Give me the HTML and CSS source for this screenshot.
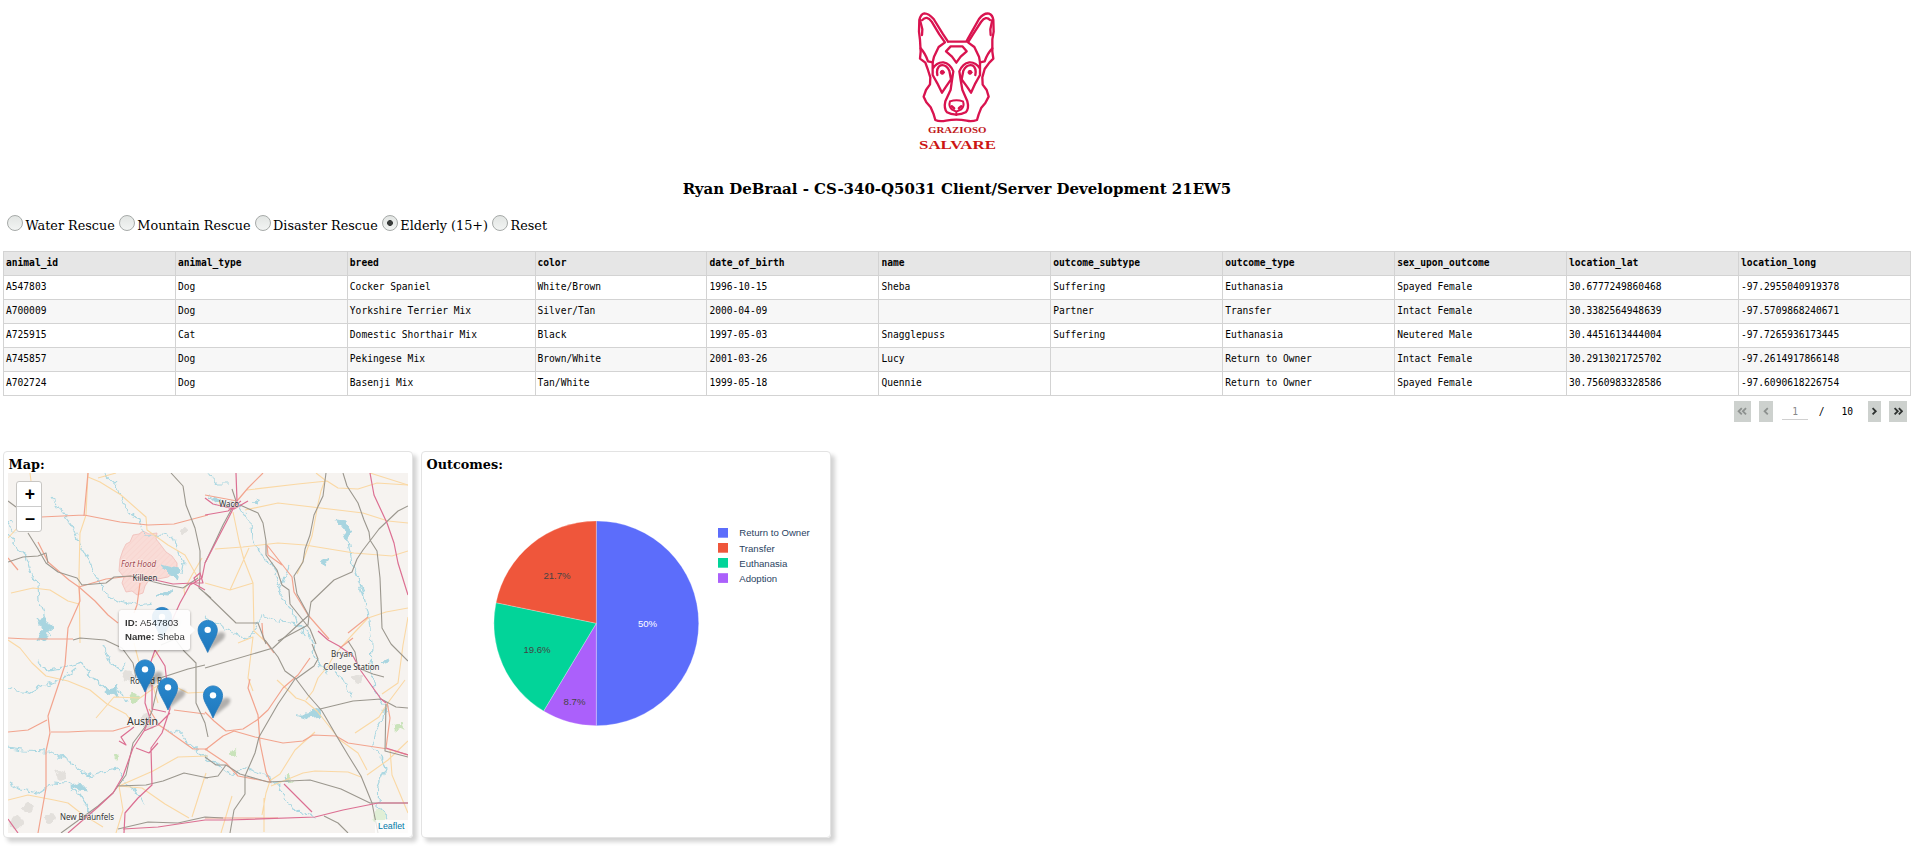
FILE: index.html
```html
<!DOCTYPE html>
<html lang="en">
<head>
<meta charset="utf-8">
<title>Grazioso Salvare Dashboard</title>
<link rel="stylesheet" href="styles.css">
</head>
<body>
<header class="brand">
  <svg class="logo" viewBox="0 0 360 480" role="img" aria-label="Grazioso Salvare">
    <g fill="none" stroke="#d9134f" stroke-width="7" stroke-linejoin="round" stroke-linecap="round">
      <path d="M144 125L199 125L206 112L237 57Q252 38 267 41Q278 45 280 60L281 95L277 118L277 155L280 176L268 188L254 207L247 232L248 254L260 270L266 290L256 309L244 323L236 343L231 360Q215 366 200 362Q169 356 138 362Q118 366 106 360L101 343L92 322L79 307L71 290L78 270L90 253L91 232L83 207L76 188L60 176L62 155L60 120L57 95L58 60Q62 42 73 40Q86 40 101 57L128 101L144 125"/>
      <path d="M60 60L67 88L66 105M67 60Q80 45 95 65L118 103L135 127L116 141L102 170L98 187L84 184Q76 160 62 145M277 60L271 88L272 105M270 60Q258 46 243 66L219 103L204 127L223 141L237 170L240 187L254 184Q262 160 277 145"/>
      <path d="M152 139L187 139L200 154L182 170L169 188L156 170L138 154Z"/>
      <path d="M98 187L98 225L112 250L126 278L136 263L153 238L148 212Q138 192 122 196Q108 204 112 225M98 206Q110 186 130 187Q150 190 160 214L156 240L152 269L136 304Q131 326 141 337Q152 343 168 344Q186 343 197 337Q208 326 202 304L187 269L182 240L178 214Q188 190 208 187Q228 186 240 206M240 187L240 225L226 250L213 278L203 263L185 238L190 212Q200 192 217 196Q230 204 226 225"/>
      <path d="M150 304Q169 298 189 304Q194 318 184 328L169 335L155 328Q145 318 150 304M169 335L169 345" stroke-width="6"/>
      <path d="M155 319L162 325M184 319L177 325" stroke-width="8"/>
      <circle cx="127" cy="217" r="6" fill="#d9134f" stroke-width="3"/>
      <circle cx="210" cy="217" r="6" fill="#d9134f" stroke-width="3"/>
    </g>
    <text class="logo-small" x="84" y="399" textLength="175" lengthAdjust="spacingAndGlyphs">GRAZIOSO</text>
    <text class="logo-large" x="57" y="446" textLength="231" lengthAdjust="spacingAndGlyphs">SALVARE</text>
  </svg>
  <h3 class="title">Ryan DeBraal - CS-340-Q5031 Client/Server Development 21EW5</h3>
</header>

<form class="filters">
  <label class="option"><input type="radio" name="f">Water Rescue</label>
  <label class="option"><input type="radio" name="f">Mountain Rescue</label>
  <label class="option"><input type="radio" name="f">Disaster Rescue</label>
  <label class="option"><input type="radio" name="f" checked>Elderly (15+)</label>
  <label class="option"><input type="radio" name="f">Reset</label>
</form>

<table class="data">
  <colgroup><col><col><col class="col-breed"><col><col><col><col><col><col><col><col></colgroup>
  <thead><tr><th>animal_id</th><th>animal_type</th><th>breed</th><th>color</th><th>date_of_birth</th><th>name</th><th>outcome_subtype</th><th>outcome_type</th><th>sex_upon_outcome</th><th>location_lat</th><th>location_long</th></tr></thead>
  <tbody>
    <tr><td>A547803</td><td>Dog</td><td>Cocker Spaniel</td><td>White/Brown</td><td>1996-10-15</td><td>Sheba</td><td>Suffering</td><td>Euthanasia</td><td>Spayed Female</td><td>30.6777249860468</td><td>-97.2955040919378</td></tr>
    <tr><td>A700009</td><td>Dog</td><td>Yorkshire Terrier Mix</td><td>Silver/Tan</td><td>2000-04-09</td><td></td><td>Partner</td><td>Transfer</td><td>Intact Female</td><td>30.3382564948639</td><td>-97.5709868240671</td></tr>
    <tr><td>A725915</td><td>Cat</td><td>Domestic Shorthair Mix</td><td>Black</td><td>1997-05-03</td><td>Snagglepuss</td><td>Suffering</td><td>Euthanasia</td><td>Neutered Male</td><td>30.4451613444004</td><td>-97.7265936173445</td></tr>
    <tr><td>A745857</td><td>Dog</td><td>Pekingese Mix</td><td>Brown/White</td><td>2001-03-26</td><td>Lucy</td><td></td><td>Return to Owner</td><td>Intact Female</td><td>30.2913021725702</td><td>-97.2614917866148</td></tr>
    <tr><td>A702724</td><td>Dog</td><td>Basenji Mix</td><td>Tan/White</td><td>1999-05-18</td><td>Quennie</td><td></td><td>Return to Owner</td><td>Spayed Female</td><td>30.7560983328586</td><td>-97.6090618226754</td></tr>
  </tbody>
</table>

<nav class="pager">
  <button class="page-btn first off" aria-label="First"><svg viewBox="0 0 10 8"><path d="M4.5 1L1.5 4L4.5 7M8.5 1L5.5 4L8.5 7"/></svg></button>
  <button class="page-btn prev off" aria-label="Previous"><svg viewBox="0 0 6 8"><path d="M4.5 1L1.5 4L4.5 7"/></svg></button>
  <span class="page-current">1</span>
  <span class="page-sep">/</span>
  <span class="page-last">10</span>
  <button class="page-btn next" aria-label="Next"><svg viewBox="0 0 6 8"><path d="M1.5 1L4.5 4L1.5 7"/></svg></button>
  <button class="page-btn last" aria-label="Last"><svg viewBox="0 0 10 8"><path d="M1.5 1L4.5 4L1.5 7M5.5 1L8.5 4L5.5 7"/></svg></button>
</nav>

<main class="panels">
  <section class="panel">
    <h4 class="panel-title">Map:</h4>
    <div class="map">
      <svg class="tiles" viewBox="0 0 400 360">
        <defs>
          <filter id="meander" x="-5%" y="-5%" width="110%" height="110%"><feTurbulence type="fractalNoise" baseFrequency="0.13" numOctaves="2" seed="4" result="n"/><feDisplacementMap in="SourceGraphic" in2="n" scale="9" xChannelSelector="R" yChannelSelector="G"/></filter>
          <filter id="soft" x="-50%" y="-50%" width="200%" height="200%"><feGaussianBlur stdDeviation="2"/></filter>
          <linearGradient id="pinfill" x1="0" y1="0" x2="0" y2="1"><stop offset="0" stop-color="#2b8ace"/><stop offset="1" stop-color="#1f78bd"/></linearGradient>
          <pattern id="hatch" width="4" height="4" patternUnits="userSpaceOnUse" patternTransform="rotate(45)"><rect width="4" height="4" fill="#f9dcd7"/><path d="M0 0V4" stroke="#f8d4cf" stroke-width="1.5"/></pattern>
          <g id="pin">
            <path d="M12 40L32 24Q38 15 28 15L20 20Z" fill="#000" opacity=".28" filter="url(#soft)"/>
            <path d="M12.5 .5C5.9 .5 .5 5.9 .5 12.5C.5 20 6 26 12.5 40.5C19 26 24.5 20 24.5 12.5C24.5 5.9 19.1 .5 12.5 .5Z" fill="url(#pinfill)" stroke="#2379bb"/>
            <circle cx="12.5" cy="12.3" r="4" fill="#fff"/>
          </g>
        </defs>
        <rect width="400" height="360" fill="#f6f3f0"/>

        <!-- urban and green areas -->
        <g fill="#e3e0dc" filter="url(#meander)">
          <circle cx="52" cy="303" r="5"/><circle cx="20" cy="335" r="5"/><circle cx="8" cy="349" r="7"/><circle cx="42" cy="345" r="6"/><circle cx="120" cy="203" r="6"/><circle cx="139" cy="250" r="8"/><circle cx="176" cy="57" r="3"/><circle cx="350" cy="206" r="4"/><circle cx="222" cy="32" r="5"/>
        </g>
        <g fill="#c9e3ba" filter="url(#meander)">
          <circle cx="126" cy="225" r="5"/><circle cx="390" cy="254" r="4"/><circle cx="225" cy="280" r="3"/><circle cx="371" cy="343" r="7" fill="#e0efd6"/><circle cx="281" cy="305" r="3"/><circle cx="108" cy="283" r="2"/>
        </g>
        <path d="M112 86L115 77L118 71L122 69L125 62L131 61L135 58L141 61L149 60L148 66L152 71L158 79L164 83L169 90L169 97L160 104L150 106L141 107L137 113L135 120L129 122L124 118L118 119L114 110L116 104L111 98Z" fill="url(#hatch)" stroke="#f0bcb8" stroke-width=".8"/>

        <!-- rivers and lakes -->
        <g fill="none" stroke="#a9d7e2" stroke-width="1.2" filter="url(#meander)">
          <path d="M42 23L55 40L66 55L72 72L82 89L87 102L100 122L112 128L132 132L144 130"/>
          <path d="M95 0L108 12L115 30L122 42L132 46L137 63L155 62L166 66L171 80L176 90L174 100"/>
          <path d="M0 62L8 72L17 82L22 98L30 112L31 128L36 144L43 160M0 48L8 60"/>
          <path d="M0 215L20 220L35 212L55 206L70 195M28 188L40 197L55 195L72 190L86 205L100 217L110 215L118 228M95 172L103 190L112 197L120 191"/>
          <path d="M0 275L15 277L40 278L55 285L63 290L80 303L95 298L110 295L117 310L128 318L136 332M0 309L12 317L30 320L45 310L60 311L72 322L85 342"/>
          <path d="M200 0L208 10L222 10M229 28L238 42L243 50L244 66L248 76L260 88L268 100L273 117L275 127L285 137L290 151L296 165M271 119L281 94"/>
          <path d="M197 145L215 154L238 166L248 158L253 142L270 148L290 150L300 160L306 171M340 68L344 90L350 106L354 118L360 138L362 155L364 172L363 196L367 216L377 233L375 245L365 262L364 274L374 285L377 298L371 312L370 332L380 344"/>
          <path d="M304 172L307 186L319 200M327 200L335 206L344 226M157 256L170 258L178 268L192 280L208 291L222 301L238 295L255 301L270 313L283 334L298 342L308 345"/>
        </g>
        <g fill="#a8d5e0" stroke="#a8d5e0" filter="url(#meander)">
          <path d="M30 147L34 142L40 151L46 154L39 160L36 167L30 167L34 158Z"/>
          <path d="M328 47L339 48L343 60L340 68L336 58Z"/><path d="M153 92L165 95L172 97L169 107L160 100Z"/>
          <path d="M149 121L157 118L165 119L160 122Z"/><path d="M288 241L300 241L311 235L313 243L300 245Z"/>
          <path d="M62 312L72 309L80 318L71 317Z"/><path d="M96 215L104 217L111 210L108 222L99 221Z"/><path d="M245 29L251 25L248 30Z"/><path d="M313 90L320 87L318 93Z"/><path d="M375 188L382 185L379 191Z"/><path d="M276 303L282 305L279 309Z"/>
          <path d="M200 23L214 27L208 30Z"/>
        </g>

        <!-- secondary roads -->
        <g fill="none" stroke="#fad8a4" stroke-width="1.1" stroke-linejoin="round">
          <path d="M22 0L23 8M3 120L25 115L42 117L60 128L71 131M0 65L12 52M72 170L71 100L72 60L78 42L80 0"/>
          <path d="M80 4L92 9L113 22L138 44L139 57L160 72L177 82L190 105M194 85L184 102L176 117L177 122M90 5L108 0"/>
          <path d="M239 17L290 11L319 8L330 15L350 16L369 10L400 12M308 0L317 7L313 18L310 31L304 63L295 88L289 101"/>
          <path d="M237 37L270 30L330 37L355 40L380 48L400 50M207 76L235 74L270 70L297 72L346 80L384 83L400 78M225 39L231 68L236 87L245 110L246 158L260 171M222 117L241 75M197 110L222 117L245 110"/>
          <path d="M400 135L378 139L360 145L346 160L335 172L325 184L320 193L310 205L305 218L298 227M362 0L400 12M400 144L395 172L390 210L374 221"/>
          <path d="M0 167L12 175L24 190L38 203L60 208L82 217L99 231L118 241L127 253M88 245L106 224L132 225L156 208L180 220L200 219M126 170L133 197L145 213L150 230M152 176L145 185"/>
          <path d="M0 327L20 322L46 327L60 330L74 341L95 354M200 283L170 284L145 298L111 313M111 313L115 337L108 360M111 313L134 315L157 331L181 345M198 300L184 344M230 170L245 164L240 205L245 218"/>
          <path d="M269 207L282 219L288 225L297 228L309 238L332 267L350 280L359 297M260 309L272 301L287 277L307 259M347 260L371 244L379 231L397 207M359 302L380 287L400 268M263 313L295 300L307 298L340 299L353 304M382 276L384 302L400 340M254 342L258 320L262 308M224 323L213 360M256 359L256 325"/>
        </g>

        <!-- primary roads -->
        <g fill="none" stroke="#f2a48e" stroke-width="1.2" stroke-linejoin="round">
          <path d="M80 0L76 43M33 44L76 42L112 49L140 52L166 51L200 42M30 69L40 89L61 107L71 114L72 128L60 155L57 192L40 243L42 260L38 278L38 315L30 360"/>
          <path d="M71 114L87 128L100 142L110 150M71 114L98 106L123 103M132 110L129 132L126 140M0 165L20 166L65 166M0 259L20 257L39 247M43 259L60 259L80 258L105 258L122 253"/>
          <path d="M141 236L151 252L171 266L185 276L200 276M197 22L229 28L240 15L255 0M259 72L273 90L284 104L286 119L300 142L321 166M259 72L260 82L274 92"/>
          <path d="M254 150L255 165L266 180M0 85L10 97M332 175L345 165M302 185L290 202L275 215L260 237L249 247L235 256L218 258L206 248L197 239M242 206L240 215L250 242L252 270L258 299L263 310M197 277L215 263L226 258L247 264L275 270L295 268L305 262L328 263L340 270L380 276L400 282M166 237L197 241M379 229L382 245L378 275"/>
          <path d="M197 345L230 345L270 345M197 276L218 290L230 303L262 309M340 160L360 144"/>
        </g>

        <!-- railways -->
        <g fill="none" stroke="#9b978e" stroke-width="1.1" stroke-linejoin="round">
          <path d="M0 28L8 34M20 60L30 76L38 90L50 99L69 105L74 112L98 110L106 104L123 103L154 111L175 115L190 105M0 89L15 84L30 83L38 80L40 90"/>
          <path d="M163 0L175 13L178 32L187 55L192 78L192 102L191 115L203 125M65 167L72 165L97 167L114 175L125 190L128 205M153 172L167 166L176 178L188 190L188 230L197 250L200 264"/>
          <path d="M224 16L228 28L215 52L208 67L197 90M232 32L250 40L255 50L258 68L258 82L269 97L274 112L281 117L282 131L302 156L308 171M318 0L315 23L306 42L302 62L297 76L295 89L286 103L289 121L301 143L300 152L270 168"/>
          <path d="M335 0L339 13L350 30L356 47L361 59L362 67L369 78L372 105L373 129L374 155L383 171M383 171L400 188M400 33L390 38L371 56L355 77L349 86L344 99L326 107L303 129L301 142L292 150L265 175L197 195M197 120L228 150L250 150L258 171"/>
          <path d="M149 206L180 196L197 192M150 212L144 238L137 254L125 270L118 302L105 320L90 333L53 360M109 313L138 312L155 308L176 300L200 305M257 167L270 184L277 198L288 206L300 222L314 238L328 262L340 282L353 303L364 330L370 360"/>
          <path d="M288 206L306 193L310 186L304 171M287 206L270 231L251 264L247 280L237 303L237 321L226 337L222 360M312 236L345 228L373 226L388 234L400 235M378 231L377 278L400 284M197 284L208 292L218 292L232 301L260 309L302 307L333 316L362 330L400 330M197 305L210 303L218 292M316 343L330 350L340 360"/>
          <path d="M110 356L140 349L170 350L197 344L215 345M340 168L347 179L350 195L365 201L376 204"/>
        </g>

        <!-- motorways -->
        <g fill="none" stroke="#dc6f92" stroke-width="1.2" stroke-linejoin="round">
          <path d="M228 0L229 28L222 42L209 67L197 90L194 105L182 112L172 130L162 152M197 25L205 31L226 36L240 28M197 42L220 38L233 28M134 104L165 111L185 110L197 117M186 105L192 100L195 110L188 110Z"/>
          <path d="M362 0L366 22L379 50L386 70L390 90L400 122M320 167L331 173L345 183L353 198L373 226L378 230M310 158L320 167"/>
          <path d="M147 177L139 200L137 230L142 245L136 258L125 275L115 303L105 320L90 334L60 360M147 177L157 193L162 236L154 260L143 275L144 312L130 325L117 340L116 360M144 212L144 236L158 239M136 258L150 252L162 240M128 275L141 280L150 270M126 254L113 264L118 272L111 268"/>
          <path d="M0 346L10 360M115 356L150 354L197 347L220 347L307 344L335 337L370 330L400 330M276 311L290 325L304 339M378 275L400 282"/>
        </g>

        <g class="place">
          <text x="211" y="34" textLength="20" lengthAdjust="spacingAndGlyphs">Waco</text>
          <text class="base" x="113" y="93.500" textLength="35" lengthAdjust="spacingAndGlyphs">Fort Hood</text>
          <text x="124.500" y="107.500" textLength="25" lengthAdjust="spacingAndGlyphs">Killeen</text>
          <text x="122" y="211" textLength="32" lengthAdjust="spacingAndGlyphs">Round R</text>
          <text class="city" x="119" y="251.500" textLength="31" lengthAdjust="spacingAndGlyphs">Austin</text>
          <text x="323" y="183.500" textLength="22" lengthAdjust="spacingAndGlyphs">Bryan</text>
          <text x="315.500" y="197" textLength="56" lengthAdjust="spacingAndGlyphs">College Station</text>
          <text x="52" y="347" textLength="54" lengthAdjust="spacingAndGlyphs">New Braunfels</text>
        </g>

        <use href="#pin" transform="translate(144 134) scale(.8)"/>
        <use href="#pin" transform="translate(189.700 147) scale(.8)"/>
        <use href="#pin" transform="translate(127 186.500) scale(.8)"/>
        <use href="#pin" transform="translate(150 204.500) scale(.8)"/>
        <use href="#pin" transform="translate(195 212.500) scale(.8)"/>
      </svg>
      <div class="zoomer"><span>+</span><span>−</span></div>
      <div class="tip"><div><b>ID:</b> A547803</div><div><b>Name:</b> Sheba</div></div>
      <a class="credit">Leaflet</a>
    </div>
  </section>

  <section class="panel">
    <h4 class="panel-title">Outcomes:</h4>
    <svg class="chart" viewBox="0 0 400 360">
      <g stroke="#fff" stroke-opacity=".5" stroke-width=".5">
        <path d="M170.300 150.300V47.900A102.400 102.400 0 0 1 170.300 252.700Z" fill="#5c6dfb"/>
        <path d="M170.300 150.300V252.700A102.400 102.400 0 0 1 117.600 238.100Z" fill="#ab60fb"/>
        <path d="M170.300 150.300L117.600 238.100A102.400 102.400 0 0 1 70 129.700Z" fill="#02d499"/>
        <path d="M170.300 150.300L70 129.700A102.400 102.400 0 0 1 170.300 47.900Z" fill="#ef563b"/>
      </g>
      <g class="slice">
        <text x="221.500" y="153.500" fill="#fff">50%</text>
        <text x="131" y="105.500">21.7%</text>
        <text x="111" y="179.500">19.6%</text>
        <text x="148.500" y="231.500">8.7%</text>
      </g>
      <rect x="292" y="55" width="10" height="9.700" fill="#5c6dfb"/>
      <rect x="292" y="70" width="10" height="9.700" fill="#ef563b"/>
      <rect x="292" y="85" width="10" height="9.700" fill="#02d499"/>
      <rect x="292" y="100.200" width="10" height="9.700" fill="#ab60fb"/>
      <g class="legend">
        <text x="313.300" y="63">Return to Owner</text>
        <text x="313.300" y="79">Transfer</text>
        <text x="313.300" y="94">Euthanasia</text>
        <text x="313.300" y="109">Adoption</text>
      </g>
    </svg>
  </section>
</main>
</body>
</html>
```
FILE: styles.css
```css
* { box-sizing: border-box; }
body {
  margin: 0;
  min-height: 865px;
  background: #fff;
  color: #000;
  font: 12.8px/15px "DejaVu Serif", serif;
}
.brand { display: flex; flex-direction: column; align-items: center; }
.logo { display: block; width: 120px; height: 160px; margin-left: 5px; }
.logo-small, .logo-large { font-family: "Liberation Serif", serif; font-weight: bold; }
.logo-small { font-size: 24px; fill: #c01820; }
.logo-large { font-size: 40px; fill: #cc1414; }
.title { margin: 20px 1px 0 0; font-size: 14.976px; line-height: 18px; }

.filters { display: flex; gap: 4px; margin: 17px 0 0 7px; height: 21px; }
.option { display: flex; align-items: flex-start; line-height: 22px; white-space: nowrap; }
.option input {
  appearance: none;
  width: 16px;
  height: 16px;
  margin: 0 2.500px 0 0;
  border: 1px solid #a6aaa8;
  border-radius: 50%;
  background: linear-gradient(#e2e5e3, #f2f4f3);
}
.option input:checked { background: radial-gradient(circle, #3a3d3c 0 2.6px, transparent 3.2px), linear-gradient(#e2e5e3, #f2f4f3); }

.data {
  width: 1908px;
  margin: 15px 0 0 3px;
  border-collapse: collapse;
  table-layout: fixed;
  font: 9.6px/12px "DejaVu Sans Mono", monospace;
}
.data th, .data td {
  height: 24px;
  padding: 0 0 1px 2px;
  border: 1px solid #d3d3d3;
  text-align: left;
  white-space: nowrap;
}
.data th { background: #e6e6e6; }
.data tbody tr:nth-child(even) { background: #f7f7f7; }
.col-breed { width: 187.700px; }

.pager {
  display: flex;
  justify-content: flex-end;
  align-items: center;
  height: 21px;
  margin: 5px 8px 0 0;
  font: 9.6px/12px "DejaVu Sans Mono", monospace;
}
.page-btn {
  display: flex;
  align-items: center;
  justify-content: center;
  height: 21px;
  padding: 0;
  border: 0;
  background: #cdd1ce;
  color: #2e3230;
}
.page-btn svg { height: 8.500px; fill: none; stroke: currentColor; stroke-width: 1.7; }
.off { color: #8d918f; }
.first { width: 17px; margin-right: 8px; }
.prev { width: 14px; margin-right: 9px; }
.next { width: 13px; margin-right: 8px; }
.last { width: 18px; }
.page-current { width: 26px; height: 16px; padding-top: 2px; border-bottom: 1px solid #d0d0d0; color: #888; text-align: center; }
.page-sep { margin-left: 10.500px; }
.page-last { margin: 0 15px 0 17px; }

.panels { display: flex; gap: 8px; margin: 29px 0 0 3px; }
.panel {
  width: 410px;
  height: 387px;
  padding: 4px;
  border: 1px solid #e3e3e3;
  border-radius: 4px;
  box-shadow: 4px 4px 4px #d3d3d3;
}
.panel-title { margin: 0 0 0 .6px; height: 17px; font-size: 12.8px; line-height: 18px; }
.map { position: relative; height: 360px; overflow: hidden; }
.tiles, .chart { display: block; width: 400px; height: 360px; }
.place { font: 8px "Noto Sans", sans-serif; fill: #333; paint-order: stroke; stroke: rgba(255,255,255,.6); stroke-width: 1px; }
.city { font-size: 10.200px; }
.base { font-style: italic; fill: #9b3d45; }
.zoomer {
  position: absolute;
  left: 8px;
  top: 8px;
  width: 26px;
  height: 51px;
  border: 1px solid #c8c6c3;
  border-radius: 3px;
  background: #fff;
  font: bold 17.6px/24px "Liberation Sans", sans-serif;
  text-align: center;
}
.zoomer span { display: block; height: 24px; padding-left: 2px; }
.zoomer span + span { height: 25px; border-top: 1px solid #ccc; }
.tip {
  position: absolute;
  left: 111px;
  top: 137px;
  width: 71px;
  height: 40px;
  padding: 6px 0 0 6px;
  border-radius: 2.5px;
  background: #fff;
  box-shadow: 0 1px 3px rgba(0,0,0,.4);
  color: #222;
  font: 9.6px/14px "Liberation Sans", sans-serif;
  white-space: nowrap;
  opacity: .9;
}
.tip::after {
  content: "";
  position: absolute;
  left: 71px;
  top: 15px;
  border: 5px solid transparent;
  border-left-color: #fff;
}
.credit {
  position: absolute;
  right: 0;
  bottom: 0;
  padding: 0 3.500px;
  background: rgba(255,255,255,.75);
  color: #0078a8;
  font: 8.8px/13px "Liberation Sans", sans-serif;
}
.slice, .legend { font: 9.6px "Liberation Sans", sans-serif; }
.slice { text-anchor: middle; fill: #444; }
.legend { fill: #2a3f5f; }
```
